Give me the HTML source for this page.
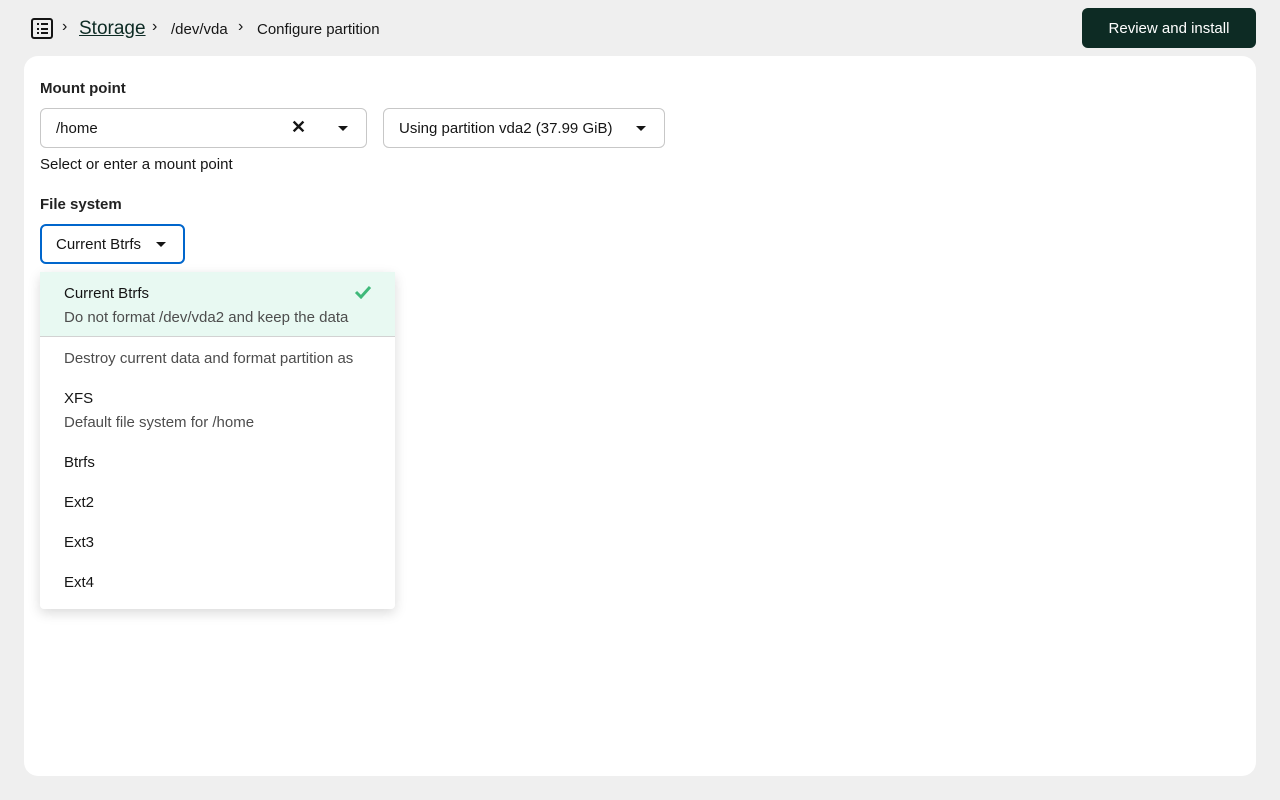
<!DOCTYPE html>
<html><head><style>
*{box-sizing:border-box;margin:0;padding:0}
body{width:1280px;height:800px;background:#efefef;font-family:"Liberation Sans",sans-serif;color:#151515;font-size:15px;position:relative;overflow:hidden}
.abs{position:absolute}
.card{left:24px;top:56px;width:1232px;height:720px;background:#fff;border-radius:14px}
.btn{left:1082px;top:8px;width:174px;height:40px;background:#0d2b24;color:#fff;border-radius:6px;text-align:center;line-height:42px;font-size:15px}
.sel{border:1px solid #c7c7c7;border-radius:6px;height:40px}
.caret{width:0;height:0;border-left:5px solid transparent;border-right:5px solid transparent;border-top:5px solid #151515}
.menu{left:40px;top:272px;width:355px;height:337px;background:#fff;border-radius:4px;box-shadow:0 4px 12px rgba(0,0,0,.15)}
.it{left:24px;font-size:15px}
.sub{color:#4d4d4d}
.lbl{font-weight:600;color:#222}
</style></head><body>
<div class="abs" style="left:31px;top:18px;width:22px;height:21px;border:2px solid #151515;border-radius:3px"></div>
<svg class="abs" style="left:31px;top:18px" width="22" height="21"><g fill="#151515"><rect x="6" y="5" width="2" height="2"/><rect x="6" y="10" width="2" height="2"/><rect x="6" y="14" width="2" height="2"/><rect x="10" y="5" width="7" height="2"/><rect x="10" y="10" width="7" height="2"/><rect x="10" y="14" width="7" height="2"/></g></svg>
<div class="abs" style="left:62px;top:18px;font-size:16px">›</div>
<div class="abs" style="left:79px;top:18px;font-size:19px;color:#0d2b24;text-decoration:underline">Storage</div>
<div class="abs" style="left:152px;top:18px;font-size:16px">›</div>
<div class="abs" style="left:171px;top:21px">/dev/vda</div>
<div class="abs" style="left:238px;top:18px;font-size:16px">›</div>
<div class="abs" style="left:257px;top:21px">Configure partition</div>
<div class="abs btn">Review and install</div>
<div class="abs card"></div>
<div class="abs lbl" style="left:40px;top:80px">Mount point</div>
<div class="abs sel" style="left:40px;top:108px;width:327px"></div>
<div class="abs" style="left:56px;top:120px">/home</div>
<div class="abs" style="left:291px;top:117px;font-size:18px;font-weight:bold">✕</div>
<div class="abs caret" style="left:338px;top:126px"></div>
<div class="abs sel" style="left:383px;top:108px;width:282px"></div>
<div class="abs" style="left:399px;top:120px">Using partition vda2 (37.99 GiB)</div>
<div class="abs caret" style="left:636px;top:126px"></div>
<div class="abs" style="left:40px;top:156px">Select or enter a mount point</div>
<div class="abs lbl" style="left:40px;top:196px">File system</div>
<div class="abs" style="left:40px;top:224px;width:145px;height:40px;border:2px solid #0066cc;border-radius:6px"></div>
<div class="abs" style="left:56px;top:236px">Current Btrfs</div>
<div class="abs caret" style="left:156px;top:242px"></div>
<div class="abs menu">
<div class="abs" style="left:0;top:0;width:355px;height:64px;background:#e8f9f2"></div>
<div class="abs it" style="top:13px">Current Btrfs</div>
<div class="abs it sub" style="top:37px">Do not format /dev/vda2 and keep the data</div>
<svg class="abs" style="left:314px;top:13px" width="18" height="14"><path d="M2 7 L7 12 L16 2" stroke="#3fb97a" stroke-width="3" fill="none"/></svg>
<div class="abs" style="left:0;top:64px;width:355px;height:1px;background:#d2d2d2"></div>
<div class="abs it sub" style="top:78px">Destroy current data and format partition as</div>
<div class="abs it" style="top:118px">XFS</div>
<div class="abs it sub" style="top:142px">Default file system for /home</div>
<div class="abs it" style="top:182px">Btrfs</div>
<div class="abs it" style="top:222px">Ext2</div>
<div class="abs it" style="top:262px">Ext3</div>
<div class="abs it" style="top:302px">Ext4</div>
</div>
</body></html>
